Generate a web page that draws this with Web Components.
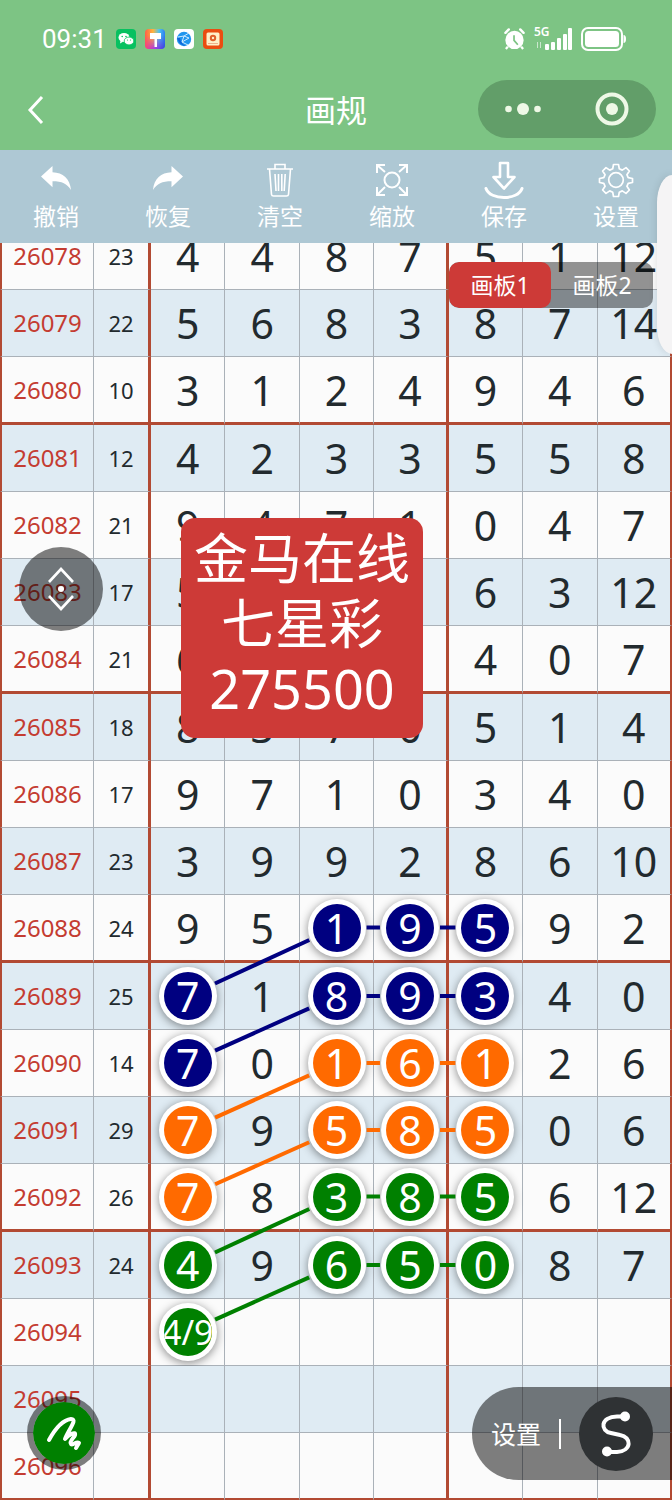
<!DOCTYPE html>
<html lang="zh-CN">
<head>
<meta charset="utf-8">
<meta name="viewport" content="width=device-width, initial-scale=1">
<title>画规</title>
<style>
  html, body { margin: 0; height: 100%; }
  body {
    font-family: "Noto Sans", "Noto Sans CJK SC", sans-serif;
    color: #fff;
    background: #fbfbfb;
  }
</style>
</head>
<body>
<draw-app></draw-app>

<script>
const ICONS = {
  undo: `<svg width="32" height="32" viewBox="0 0 32 32"><path fill="#fff" d="M1 12.500 12.500 2v6.200C23 8.600 30 14.500 31 26c-4-6.500-9-8.800-18.500-8.800v6z"/></svg>`,
  redo: `<svg width="32" height="32" viewBox="0 0 32 32"><path fill="#fff" d="M31 12.500 19.500 2v6.200C9 8.600 2 14.500 1 26c4-6.500 9-8.800 18.500-8.800v6z"/></svg>`,
  clear: `<svg width="32" height="36" viewBox="0 0 32 36" fill="none" stroke="#fff" stroke-width="1.600"><path d="M3 7h26M11 7V2.500h10V7M5.500 7l2 25.500q.2 1.500 2 1.500h13q1.800 0 2-1.500l2-25.500M11 12l1 17M14.500 12v17M17.800 12v17M21.200 12l-1 17"/></svg>`,
  zoom: `<svg width="36" height="36" viewBox="0 0 36 36" fill="none" stroke="#fff" stroke-width="2"><circle cx="18" cy="18" r="7.500"/><path d="M3 11V3h8M3 3l8 7M25 3h8v8M33 3l-8 7M3 25v8h8M3 33l8-8M33 25v8h-8M33 33l-8-8"/></svg>`,
  save: `<svg width="40" height="40" viewBox="0 0 40 40" fill="none" stroke="#fff" stroke-width="2.600" stroke-linejoin="round" stroke-linecap="round"><path d="M16 3h8v14h6.500L20 28.500 9.500 17H16z"/><path d="M2 28.500C6 40.500 34 40.500 38 28.500" stroke-width="3"/></svg>`,
  settings: `<svg width="36" height="36" viewBox="0 0 36 36" fill="none" stroke="#fff" stroke-width="1.700" stroke-linejoin="round"><circle cx="18" cy="18" r="7.300"/><path d="M15.500 2.500h5l.8 4.300 3 1.300 3.700-2.500 3.400 3.400-2.500 3.700 1.300 3 4.300.8v4l-4.300.8-1.300 3 2.500 3.700-3.400 3.400-3.700-2.500-3 1.300-.8 4.300h-5l-.8-4.300-3-1.300L8 31.400 4.600 28l2.500-3.700-1.300-3-4.300-.8v-4l4.300-.8 1.300-3L4.600 9 8 5.600l3.700 2.500 3-1.300z"/></svg>`,
};

const TOOLS = [
  ["undo", "撤销"], ["redo", "恢复"], ["clear", "清空"],
  ["zoom", "缩放"], ["save", "保存"], ["settings", "设置"],
];

// issue, sum of the first four, then seven numbers
const DRAWS = [
  [26078, 23, 4, 4, 8, 7, 5, 1, 12],
  [26079, 22, 5, 6, 8, 3, 8, 7, 14],
  [26080, 10, 3, 1, 2, 4, 9, 4, 6],
  [26081, 12, 4, 2, 3, 3, 5, 5, 8],
  [26082, 21, 9, 4, 7, 1, 0, 4, 7],
  [26083, 17, 5, 3, 6, 3, 6, 3, 12],
  [26084, 21, 6, 5, 3, 7, 4, 0, 7],
  [26085, 18, 8, 3, 7, 0, 5, 1, 4],
  [26086, 17, 9, 7, 1, 0, 3, 4, 0],
  [26087, 23, 3, 9, 9, 2, 8, 6, 10],
  [26088, 24, 9, 5, 1, 9, 5, 9, 2],
  [26089, 25, 7, 1, 8, 9, 3, 4, 0],
  [26090, 14, 7, 0, 1, 6, 1, 2, 6],
  [26091, 29, 7, 9, 5, 8, 5, 0, 6],
  [26092, 26, 7, 8, 3, 8, 5, 6, 12],
  [26093, 24, 4, 9, 6, 5, 0, 8, 7],
  [26094], [26095], [26096],
];

// each chain starts in column 0 one row below its other three balls
const CHAINS = [
  { row: 26088, color: "#000080" },
  { row: 26089, color: "#000080" },
  { row: 26090, color: "#ff6a00" },
  { row: 26091, color: "#ff6a00" },
  { row: 26092, color: "#008000" },
  { row: 26093, color: "#008000", guess: "4/9" },
];

class StatusBar extends HTMLElement {
  constructor() {
    super();
    this.attachShadow({ mode: "open" }).innerHTML = `
      <style>
        :host {
          display: flex; align-items: center; gap: 9px;
          height: 70px; padding: 8px 46px 0 42px; box-sizing: border-box;
        }
        .time { font: 400 26px/32px Roboto, sans-serif; }
        .spacer { flex: 1; }
        svg { display: block; flex: none; }
        .net { position: relative; display: block; }
        .net span {
          position: absolute; left: 0; top: -3px;
          font-size: 12px; line-height: 14px; font-weight: 600;
        }
      </style>
      <span class="time">09:31</span>
      <svg width="20" height="20" viewBox="0 0 20 20">
        <rect width="20" height="20" rx="4" fill="#07c160"/>
        <ellipse cx="8" cy="8.500" rx="5.500" ry="4.500" fill="#fff"/>
        <path d="M4.500 11.500 4 14.500l3-1.800z" fill="#fff"/>
        <ellipse cx="13" cy="12" rx="4.800" ry="3.900" fill="#fff" stroke="#07c160" stroke-width=".8"/>
        <g fill="#07c160"><circle cx="6.200" cy="7.500" r=".8"/><circle cx="10" cy="7.500" r=".8"/><circle cx="11.500" cy="11" r=".6"/><circle cx="14.500" cy="11" r=".6"/></g>
      </svg>
      <svg width="20" height="20" viewBox="0 0 20 20">
        <defs>
          <linearGradient id="a" x1="0" y1="0" x2="1" y2="0"><stop offset="0" stop-color="#ff6048"/><stop offset=".4" stop-color="#ffb43c"/><stop offset=".7" stop-color="#4fc4f0"/><stop offset="1" stop-color="#2c7cf2"/></linearGradient>
          <linearGradient id="b" x1="0" y1="0" x2="1" y2="0"><stop offset="0" stop-color="#ff3f7e"/><stop offset=".5" stop-color="#a33be8"/><stop offset="1" stop-color="#3347df"/></linearGradient>
          <linearGradient id="c" x1="0" y1="0" x2="0" y2="1"><stop offset=".3" stop-color="#fff" stop-opacity="0"/><stop offset="1" stop-color="#fff"/></linearGradient>
          <mask id="m"><rect width="20" height="20" fill="url(#c)"/></mask>
        </defs>
        <rect width="20" height="20" rx="4" fill="url(#a)"/>
        <rect width="20" height="20" rx="4" fill="url(#b)" mask="url(#m)"/>
        <path d="M5 4h11v6h-4v8H9.500v-8H5z" fill="#fff"/>
      </svg>
      <svg width="20" height="20" viewBox="0 0 20 20">
        <rect width="20" height="20" rx="4" fill="#fff"/>
        <circle cx="10" cy="10" r="7.200" fill="#2196ee"/>
        <path d="M4 8l6-1 5-3M10 7l-2 6 6 3M8 13l7-4M10 7l5 2" fill="none" stroke="#cfeaff" stroke-width="1"/>
        <path d="M3 9q3 8 9 8-5-2-6-8z" fill="#1265d8"/>
      </svg>
      <svg width="20" height="20" viewBox="0 0 20 20">
        <rect width="20" height="20" rx="4" fill="#ea4d11"/>
        <rect x="3.500" y="3.500" width="13" height="13" rx="1.500" fill="#fff0c9"/>
        <circle cx="10" cy="9" r="3.200" fill="#e0602a"/><circle cx="10" cy="9" r="1.200" fill="#fff0c9"/>
        <path d="M5 14.500h10" stroke="#eeb18a"/>
      </svg>
      <span class="spacer"></span>
      <svg width="21" height="22" viewBox="0 0 22 23">
        <circle cx="11" cy="12.500" r="9.600" fill="#fff"/>
        <path d="M1.500 5 5 1.500M20.500 5 17 1.500" stroke="#fff" stroke-width="2.600" stroke-linecap="round"/>
        <path d="M4 19.500 2 22M18 19.500l2 2.500" stroke="#fff" stroke-width="2.400"/>
        <path d="M10.500 7.500v5.500l4 4.500" fill="none" stroke="#7dc484" stroke-width="1.800"/>
      </svg>
      <span class="net">
        <span>5G</span>
        <svg width="38" height="22" viewBox="0 0 38 22" fill="#fff">
          <path d="M3 14h1v6H3zM6 14h1v6H6z" opacity=".6"/>
          <rect x="11" y="16" width="4" height="6" rx="1"/><rect x="17" y="14" width="4" height="8" rx="1"/>
          <rect x="23" y="10" width="4" height="12" rx="1"/><rect x="29" y="6" width="4" height="16" rx="1"/>
          <rect x="34" y="0" width="4" height="22" rx="1"/>
        </svg>
      </span>
      <svg width="45" height="24" viewBox="0 0 45 24">
        <rect x="1" y="1" width="40" height="22" rx="6" fill="none" stroke="#fff" stroke-width="2"/>
        <rect x="4" y="4" width="34" height="16" rx="3.500" fill="#fff"/>
        <path d="M42.500 8q2.500 0 2.500 4t-2.500 4z" fill="#fff"/>
      </svg>
    `;
  }
}

class NavBar extends HTMLElement {
  constructor() {
    super();
    this.attachShadow({ mode: "open" }).innerHTML = `
      <style>
        :host {
          display: grid; grid-template-columns: 1fr auto 1fr; align-items: center;
          height: 80px; padding: 0 16px;
        }
        h1 { margin: 0; font-size: 31px; line-height: 40px; font-weight: 400; }
        button {
          display: flex; align-items: center; justify-content: center;
          border: 0; padding: 0; background: none; color: inherit;
        }
        .back { width: 40px; height: 48px; }
        .capsule {
          justify-self: end; display: flex; margin-top: -2px;
          width: 178px; height: 58px; border-radius: 29px; background: #629e69;
        }
        .capsule button { flex: 1; }
      </style>
      <button class="back" aria-label="返回">
        <svg width="18" height="30" viewBox="0 0 18 30"><path d="M15 2 3 15l12 13" fill="none" stroke="#fff" stroke-width="3"/></svg>
      </button>
      <h1><slot></slot></h1>
      <div class="capsule">
        <button aria-label="更多">
          <svg width="36" height="14" viewBox="0 0 36 14" fill="#eef8e6"><circle cx="3.500" cy="7" r="3.300"/><circle cx="18" cy="7" r="6"/><circle cx="32.500" cy="7" r="3.300"/></svg>
        </button>
        <button aria-label="关闭">
          <svg width="34" height="34" viewBox="0 0 34 34"><circle cx="17" cy="17" r="14.500" fill="none" stroke="#eef8e6" stroke-width="4"/><circle cx="17" cy="17" r="6" fill="#eef8e6"/></svg>
        </button>
      </div>
    `;
  }
}

class ToolButton extends HTMLElement {
  connectedCallback() {
    const icon = ICONS[this.getAttribute("icon")] || "";
    this.attachShadow({ mode: "open" }).innerHTML = `
      <style>
        :host { display: block; flex: 1; }
        button {
          display: flex; flex-direction: column; align-items: center;
          width: 100%; border: 0; padding: 10px 0 11px; background: none;
          font: inherit; font-size: 23px; line-height: 32px; color: #fff;
        }
        .icon { display: flex; align-items: center; height: 40px; }
      </style>
      <button><span class="icon">${icon}</span><slot></slot></button>
    `;
  }
}

class ToolBar extends HTMLElement {
  constructor() {
    super();
    this.attachShadow({ mode: "open" }).innerHTML = `
      <style>
        :host { display: flex; background: #aec8d4; }
      </style>
      ${TOOLS.map(([icon, label]) => `<tool-button icon="${icon}">${label}</tool-button>`).join("")}
    `;
  }
}

class NumberBall extends HTMLElement {
  connectedCallback() {
    this.attachShadow({ mode: "open" }).innerHTML = `
      <style>
        :host {
          display: flex; box-sizing: border-box; width: 58px; height: 58px; margin: 0 auto;
          border-radius: 50%; background: #fff; padding: 5px;
          box-shadow: 0 2px 10px rgba(0, 0, 0, 0.45);
        }
        span {
          flex: 1; display: flex; align-items: center; justify-content: center;
          border-radius: 50%; overflow: hidden; color: #fff;
          background: ${this.getAttribute("color")};
        }
        :host([small]) span { font-size: 34px; }
      </style>
      <span><slot></slot></span>
    `;
  }
}

class DrawBoard extends HTMLElement {
  constructor() {
    super();
    this._shadow = this.attachShadow({ mode: "open" });
    this._onResize = () => this._drawLines();
  }

  connectedCallback() {
    this._render();
    this._drawLines();
    this.scrollTop = 20;
    window.addEventListener("resize", this._onResize);
  }

  disconnectedCallback() {
    window.removeEventListener("resize", this._onResize);
  }

  _findBall(issue, col) {
    for (const chain of CHAINS) {
      if (col === 0 && chain.row + 1 === issue) return chain;
      if (col >= 2 && col <= 4 && chain.row === issue) return chain;
    }
    return null;
  }

  _cell(issue, value, col) {
    const chain = this._findBall(issue, col);
    if (!chain) return `<td>${value}</td>`;
    const guess = col === 0 && chain.guess;
    return `<td><number-ball id="b${issue}-${col}" color="${chain.color}" ${guess ? "small" : ""}>${guess || value}</number-ball></td>`;
  }

  _row([issue, sum = "", ...nums]) {
    const cells = [0, 1, 2, 3, 4, 5, 6].map((col) => this._cell(issue, nums[col] ?? "", col));
    return `<tr class="${issue % 4 === 0 ? "last" : ""}">
      <th scope="row">${issue}</th><td class="sum">${sum}</td>${cells.join("")}
    </tr>`;
  }

  _drawLines() {
    const sheet = this._shadow.querySelector(".sheet").getBoundingClientRect();
    const centre = (issue, col) => {
      const r = this._shadow.getElementById(`b${issue}-${col}`).getBoundingClientRect();
      return [r.x + r.width / 2 - sheet.x, r.y + r.height / 2 - sheet.y];
    };
    let lines = "";
    for (const { row, color } of CHAINS) {
      const points = [centre(row + 1, 0), centre(row, 2), centre(row, 3), centre(row, 4)];
      for (let i = 1; i < points.length; i++) {
        const [x1, y1] = points[i - 1];
        const [x2, y2] = points[i];
        const len = Math.hypot(x2 - x1, y2 - y1);
        const dx = (x2 - x1) / len * 30;
        const dy = (y2 - y1) / len * 30;
        lines += `<line x1="${x1 + dx}" y1="${y1 + dy}" x2="${x2 - dx}" y2="${y2 - dy}" stroke="${color}"/>`;
      }
    }
    this._shadow.querySelector(".lines").innerHTML = lines;
  }

  _render() {
    this._shadow.innerHTML = `
      <style>
        :host { display: block; overflow: auto; scrollbar-width: none; }
        .sheet { position: relative; }
        .lines {
          position: absolute; inset: 0; width: 100%; height: 100%;
          stroke-width: 4; pointer-events: none;
        }
        table {
          width: 100%; table-layout: fixed;
          border-collapse: separate; border-spacing: 0; color: #222a2e;
        }
        .issue { width: 94px; }
        .total { width: 57px; }
        th, td {
          box-sizing: border-box; height: 67px; padding: 0;
          border: 0 solid #aab1b8; border-width: 0 1px 1px 0;
          font-size: 41px; line-height: 48px; text-align: center;
        }
        tr { background: #fbfbfb; }
        tr:nth-child(even) { background: #dfebf3; }
        th {
          font-size: 24px; font-weight: 400; color: #c43c31;
          border-left: 2px solid #b24a33;
        }
        .sum { font-size: 22px; }
        td:nth-child(2), td:nth-child(6) { border-right: 3px solid #b24a33; }
        td:last-child { border-right: 2px solid #b24a33; }
        .last > * { height: 68px; border-bottom: 3px solid #b24a33; }
      </style>
      <div class="sheet">
        <table>
          <colgroup><col class="issue"><col class="total"><col span="7"></colgroup>
          <tbody>${DRAWS.map((draw) => this._row(draw)).join("")}</tbody>
        </table>
        <svg class="lines"></svg>
      </div>
    `;
  }
}

class BoardTabs extends HTMLElement {
  constructor() {
    super();
    this.attachShadow({ mode: "open" }).innerHTML = `
      <style>
        :host {
          display: flex; border-radius: 10px; overflow: hidden;
          background: rgba(0, 0, 0, 0.42);
        }
        button {
          width: 102px; height: 46px; border: 0; padding: 0; background: none;
          font: inherit; font-size: 23px; line-height: 44px; color: #fff;
        }
        button[aria-selected="true"] { background: #cd3a37; border-radius: 10px; }
      </style>
      <button role="tab" aria-selected="true">画板1</button>
      <button role="tab" aria-selected="false">画板2</button>
    `;
  }

  connectedCallback() {
    this.setAttribute("role", "tablist");
  }
}

class NoticeCard extends HTMLElement {
  constructor() {
    super();
    this.attachShadow({ mode: "open" }).innerHTML = `
      <style>
        :host {
          display: block; padding: 8px 13px 17px; border-radius: 14px;
          background: #cd3a37; color: #fff;
          font-size: 54px; line-height: 65px; text-align: center;
        }
        ::slotted(div) { white-space: nowrap; }
      </style>
      <slot></slot>
    `;
  }
}

class RoundButton extends HTMLElement {
  connectedCallback() {
    this.attachShadow({ mode: "open" }).innerHTML = `
      <style>
        :host { display: block; }
        button {
          display: flex; align-items: center; justify-content: center;
          width: var(--size, 74px); height: var(--size, 74px);
          border: var(--ring, 0) solid rgba(0, 0, 0, 0.5); padding: 0; border-radius: 50%;
          background: var(--fill, rgba(0, 0, 0, 0.5)); background-clip: padding-box;
        }
      </style>
      <button aria-label="${this.getAttribute("label")}"><slot></slot></button>
    `;
  }
}

class LineSettings extends HTMLElement {
  constructor() {
    super();
    this.attachShadow({ mode: "open" }).innerHTML = `
      <style>
        :host {
          display: flex; align-items: center; gap: 18px;
          box-sizing: border-box; height: 93px; padding: 0 19px;
          border-radius: 47px 0 0 47px; background: rgba(0, 0, 0, 0.5);
        }
        .text {
          border: 0; padding: 0; background: none;
          font: inherit; font-size: 25px; line-height: 36px; color: #fff;
        }
        .bar { width: 2px; height: 30px; background: #fff; }
        round-button { --fill: #2f3234; }
      </style>
      <button class="text">设置</button>
      <span class="bar"></span>
      <round-button label="曲线">
        <svg width="32" height="48" viewBox="0 0 32 48">
          <path d="M25 6.500H17C0 7 0 21 11 23L20 25C32 27 32 41 17 42H7" fill="none" stroke="#fff" stroke-width="4"/>
          <circle cx="25" cy="6.500" r="5" fill="#fff"/><circle cx="7" cy="41.500" r="5" fill="#fff"/>
        </svg>
      </round-button>
    `;
  }
}

class DrawApp extends HTMLElement {
  constructor() {
    super();
    this.attachShadow({ mode: "open" }).innerHTML = `
      <style>
        :host { display: flex; flex-direction: column; height: 100vh; position: relative; overflow: hidden; }
        header { background: #7dc484; }
        main { flex: 1; min-height: 0; position: relative; display: flex; }
        draw-board { flex: 1; }
        /* floating over the board */
        board-tabs { position: absolute; top: 19px; right: 19px; }
        notice-card { position: absolute; top: 275px; left: 181px; }
        .move { position: absolute; top: 304px; left: 19px; --size: 84px; }
        .pen { position: absolute; bottom: 30px; left: 27px; --ring: 6px; --fill: #008000; }
        line-settings { position: absolute; bottom: 20px; right: 0; }
        .drawer {
          position: absolute; top: 175px; right: 0; width: 15px; height: 179px;
          border-radius: 15px 0 0 15px / 28px 0 0 28px; background: #f5f4f5;
          box-shadow: 0 0 8px rgba(0, 0, 0, 0.12);
        }
      </style>
      <header>
        <status-bar></status-bar>
        <nav-bar>画规</nav-bar>
      </header>
      <tool-bar></tool-bar>
      <main>
        <draw-board></draw-board>
        <board-tabs></board-tabs>
        <notice-card>
          <div>金马在线</div>
          <div>七星彩</div>
          <div>275500</div>
        </notice-card>
        <round-button class="move" label="移动">
          <svg width="28" height="48" viewBox="0 0 28 48" fill="none" stroke="#fff" stroke-width="2.600">
            <path d="M2 17 14 4l12 13M2 31l12 13 12-13"/><circle cx="14" cy="24" r="3" fill="#fff" stroke="none"/>
          </svg>
        </round-button>
        <round-button class="pen" label="画笔">
          <svg width="38" height="38" viewBox="0 0 38 38" fill="none" stroke="#fff" stroke-width="4" stroke-linecap="round" stroke-linejoin="round">
            <path d="M4 26C10 15 18 6 26 5 33 5 24 15 20 25 24 20 31 17 30 21 29 24 24 27 26 30 28 32 31 27 34 29L31 34"/>
          </svg>
        </round-button>
        <line-settings></line-settings>
      </main>
      <div class="drawer"></div>
    `;
  }
}

customElements.define("status-bar", StatusBar);
customElements.define("nav-bar", NavBar);
customElements.define("tool-button", ToolButton);
customElements.define("tool-bar", ToolBar);
customElements.define("number-ball", NumberBall);
customElements.define("draw-board", DrawBoard);
customElements.define("board-tabs", BoardTabs);
customElements.define("notice-card", NoticeCard);
customElements.define("round-button", RoundButton);
customElements.define("line-settings", LineSettings);
customElements.define("draw-app", DrawApp);
</script>
</body>
</html>
